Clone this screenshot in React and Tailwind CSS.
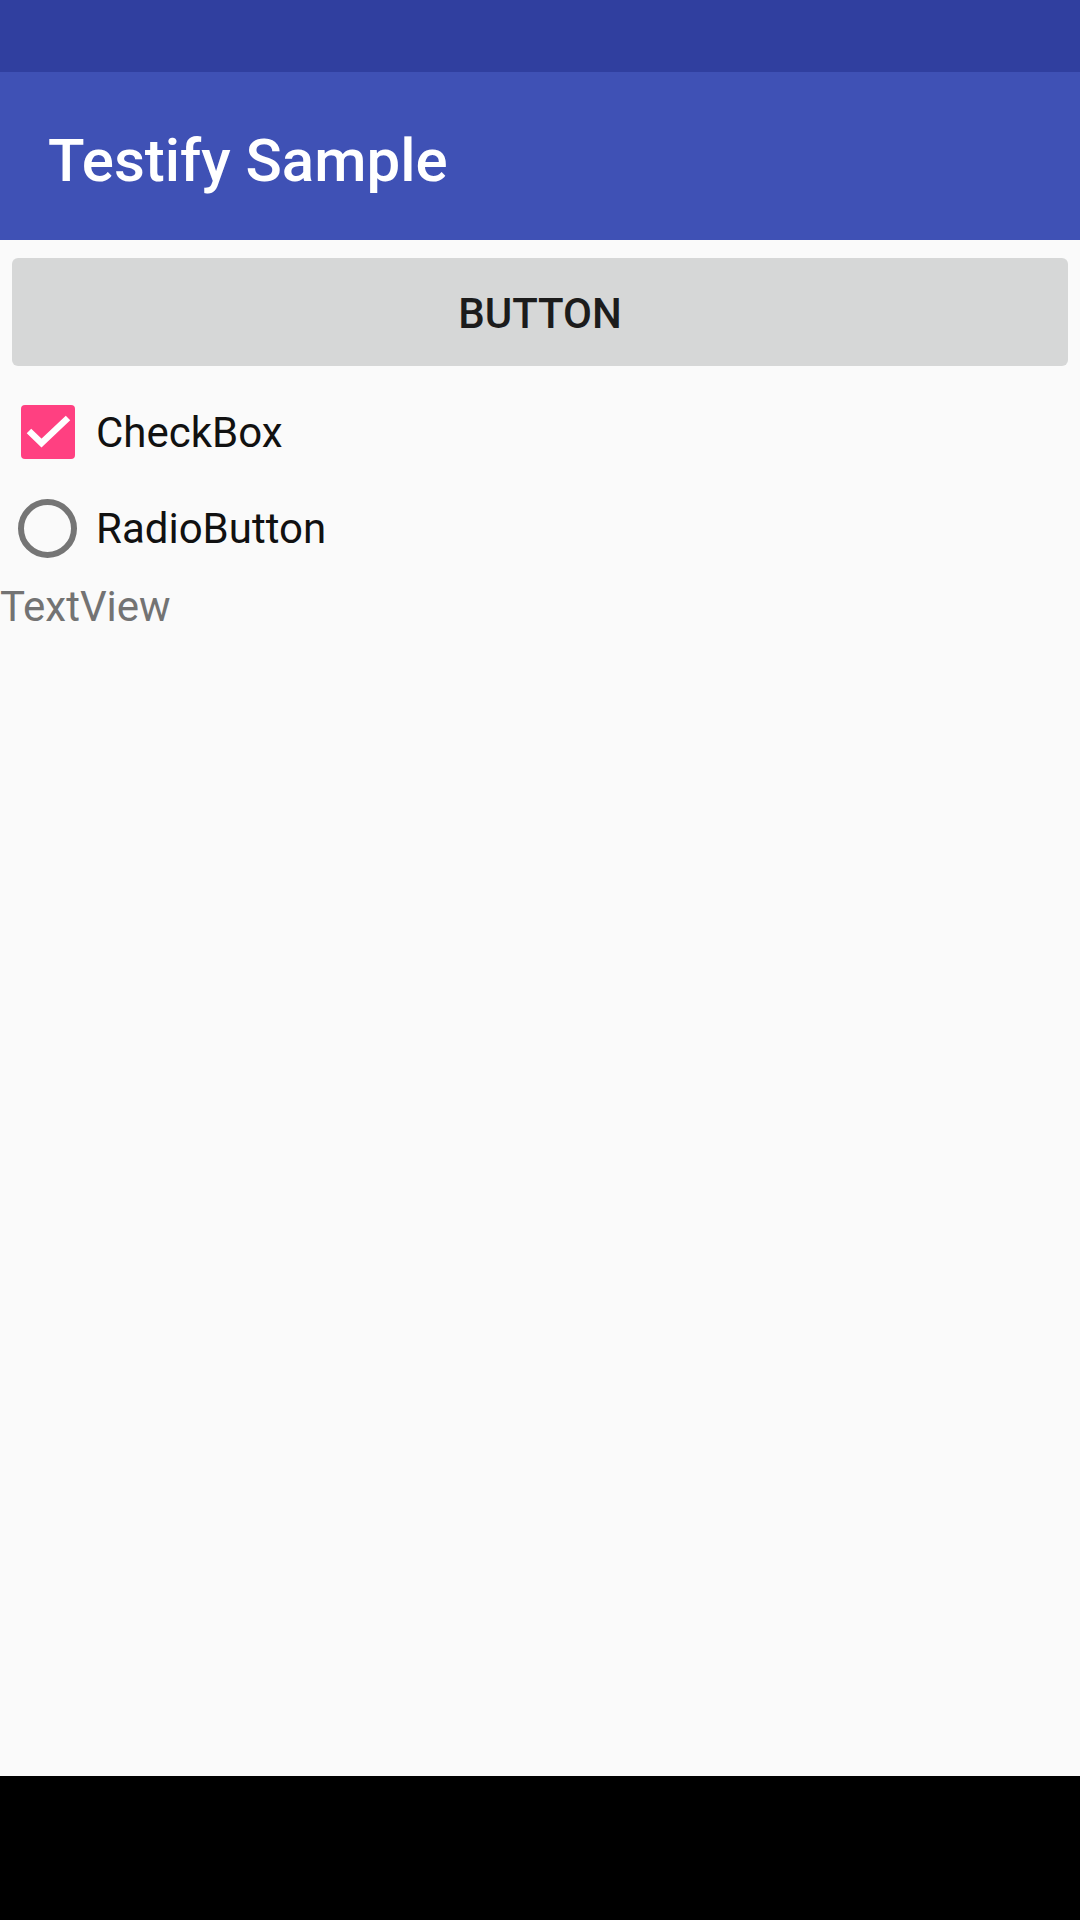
export default function App() {
  const font = { fontFamily: 'Roboto, "Noto Sans", sans-serif' };
  return (
    <div className="flex flex-col w-[1080px] h-[1920px] bg-[#FAFAFA] overflow-hidden" style={font}>
      <div className="h-[72px] shrink-0 bg-[#303F9F]" />
      <div className="h-[168px] shrink-0 bg-[#3F51B5]">
        <div className="pl-[48px] pt-[59px] text-[60px] leading-[60px] font-medium text-white">
          Testify Sample
        </div>
      </div>
      <div className="flex-1 flex flex-col">
        <div className="px-[12px] pt-[18px] pb-[18px]">
          <div className="h-[108px] rounded-[6px] bg-[#D6D7D7] flex items-center justify-center pt-[3px] text-[42px] leading-[42px] font-medium text-[#1c1c1c]">
            BUTTON
          </div>
        </div>
        <div className="h-[96px] flex items-center">
          <div className="ml-[21px] w-[54px] h-[54px] rounded-[4px] bg-[#FF4081] flex items-center justify-center">
            <svg width="54" height="54" viewBox="0 0 54 54">
              <path d="M8 26 L20.5 38 L47 13" fill="none" stroke="#FFFFFF" strokeWidth="6.5" />
            </svg>
          </div>
          <span className="ml-[21px] pt-[2px] text-[42px] leading-[42px] text-[#111111]">CheckBox</span>
        </div>
        <div className="h-[96px] flex items-center">
          <div className="ml-[18px] w-[59px] h-[59px] rounded-full border-[6px] border-[#757575]" />
          <span className="ml-[19px] pt-[2px] text-[42px] leading-[42px] text-[#111111]">RadioButton</span>
        </div>
        <div className="mt-[10px] text-[42px] leading-[42px] text-[#737373]">TextView</div>
      </div>
      <div className="h-[144px] shrink-0 bg-black" />
    </div>
  );
}
